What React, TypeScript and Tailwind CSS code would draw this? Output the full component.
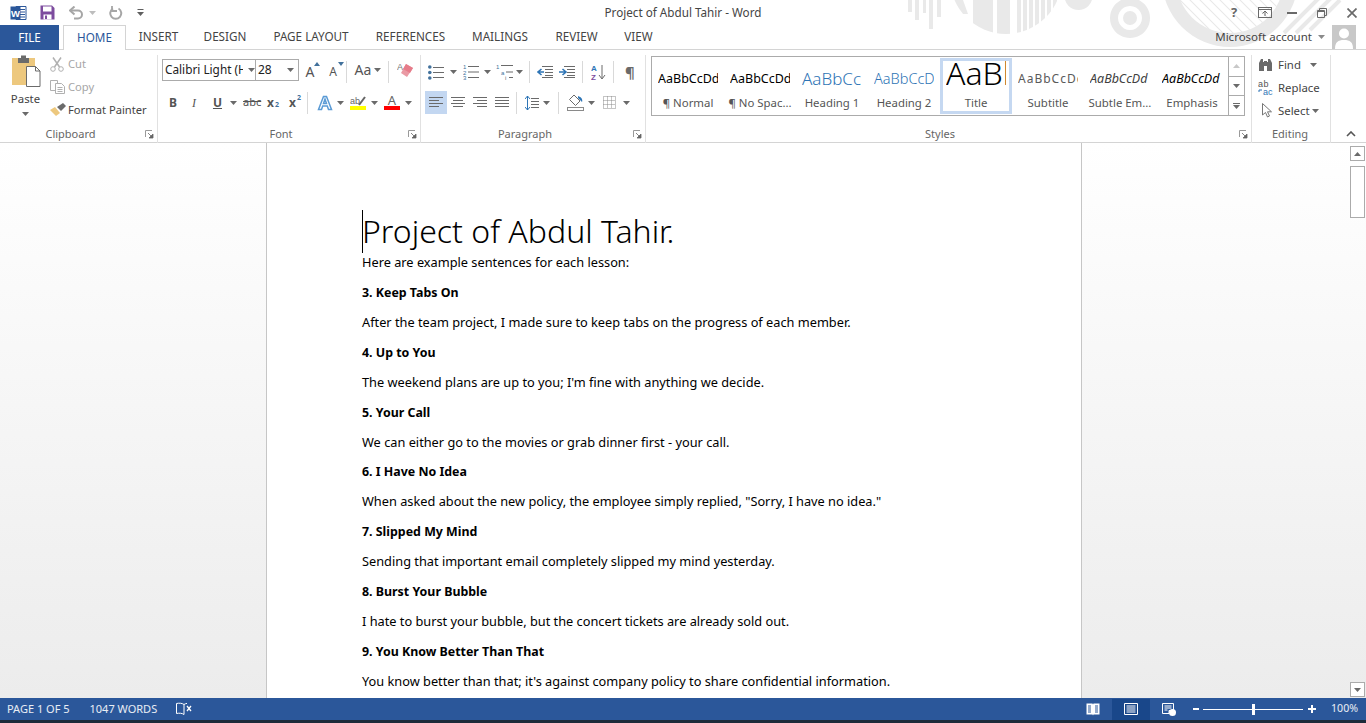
import React from "react";

const ui = "font-['Noto_Sans',sans-serif]";

function Caret({ c = "#6a6a6a", className = "" }: { c?: string; className?: string }) {
  return (
    <svg width="7" height="4" viewBox="0 0 7 4" className={"shrink-0 " + className}>
      <path d="M0 0h7L3.5 4z" fill={c} />
    </svg>
  );
}

function Launcher() {
  return (
    <svg width="9" height="9" viewBox="0 0 9 9" className="shrink-0">
      <path d="M0.5 7V0.5H7" fill="none" stroke="#9a9a9a" />
      <path d="M3 3l4 4M8 4v4H4z" fill="#666" stroke="#666" strokeWidth="0.8" />
    </svg>
  );
}

function Sep({ h = "h-[30px]" }: { h?: string }) {
  return <div className={"w-px bg-[#d9d9d9] shrink-0 " + h} />;
}

function Lines({ w = 16, rows, color = "#6a6a6a" }: { w?: number; rows: [number, number][]; color?: string }) {
  return (
    <svg width={w} height="13" viewBox={`0 0 ${w} 13`} className="shrink-0">
      {rows.map(([a, b], i) => (
        <rect key={i} x={a} y={i * 3 + 0.0} width={b - a} height="1" fill={color} />
      ))}
    </svg>
  );
}

function Watermark() {
  const stripes: number[] = [];
  for (let x = 1017; x < 1058; x += 6) stripes.push(x);
  const diag: number[] = [];
  for (let x = 1150; x < 1300; x += 10) diag.push(x);
  return (
    <svg className="absolute left-0 top-0 pointer-events-none" width="1366" height="50" viewBox="0 0 1366 50">
      <defs>
        <clipPath id="c1"><circle cx="1006" cy="-22" r="56" /></clipPath>
        <clipPath id="c3"><circle cx="1230" cy="-21" r="54" /></clipPath>
      </defs>
      <g fill="#e9e9e9">
        <rect x="908" y="0" width="4" height="12" />
        <rect x="915" y="0" width="4" height="20" />
        <rect x="923" y="0" width="3" height="13" />
        <rect x="929" y="0" width="4" height="29" />
        <rect x="937" y="0" width="4" height="17" />
        <g clipPath="url(#c1)">
          <path d="M950 0h13l5 14-10 0z" />
          <rect x="973" y="0" width="20" height="40" />
          <rect x="997" y="0" width="13" height="40" />
          {stripes.map((x) => <rect key={x} x={x} y="0" width="4" height="40" />)}
        </g>
        <circle cx="1078.5" cy="-4" r="14" />
        <path fillRule="evenodd" d="M1130 -2a20 20 0 1 0 0.01 0zM1130 6a12 12 0 1 1 -0.01 0z" />
        <circle cx="1130" cy="18" r="7" />
        <circle cx="1230" cy="-21" r="68" />
      </g>
      <g clipPath="url(#c3)" stroke="#ffffff" strokeWidth="6">
        {diag.map((x) => <path key={x} d={`M${x} -5l60 60`} />)}
      </g>
      <g stroke="#e9e9e9" strokeWidth="4">
        <path d="M1284 33L1320 -3M1296 33L1332 -3M1310 30L1340 0" />
      </g>
    </svg>
  );
}

function WordLogo() {
  return (
    <svg width="17" height="16" viewBox="0 0 17 16">
      <path d="M6 1.5h10v13H6z" fill="#fff" stroke="#2b579a" />
      <path d="M10 4.5h5M10 7h5M10 9.5h5M10 12h5" stroke="#2b579a" />
      <rect x="0.5" y="1.5" width="10" height="13" fill="#2b579a" />
      <text x="5.5" y="11.5" fontSize="9.5" fontWeight="700" fill="#fff" textAnchor="middle" fontFamily="Liberation Sans">W</text>
    </svg>
  );
}

function TitleBar() {
  return (
    <div className="relative z-10 h-[25px] flex items-center shrink-0">
      <div className="w-[40px] pl-[10px] flex items-center shrink-0"><WordLogo /></div>
      <svg width="15" height="15" viewBox="0 0 15 15" className="shrink-0">
        <path d="M0.5 0.5h11.5l2.5 2.5v11.5h-14z" fill="#7d4c9e" />
        <rect x="3" y="1.5" width="8.5" height="5" fill="#fff" />
        <rect x="3.5" y="9.5" width="8" height="5" fill="#fff" />
        <rect x="5" y="10.5" width="2" height="3.5" fill="#7d4c9e" />
      </svg>
      <svg width="15" height="14" viewBox="0 0 15 14" className="ml-[14px] shrink-0">
        <path d="M2 4.5h7a4 4 0 0 1 0 8H5" fill="none" stroke="#a6a6a6" strokeWidth="2" />
        <path d="M5.5 0.5L1 4.5l4.5 4" fill="none" stroke="#a6a6a6" strokeWidth="2" />
      </svg>
      <Caret c="#bdbdbd" className="ml-[5px]" />
      <svg width="14" height="14" viewBox="0 0 14 14" className="ml-[13px] shrink-0">
        <path d="M9.5 2.5a5.5 5.5 0 1 1-5.5 0" fill="none" stroke="#a6a6a6" strokeWidth="2" />
        <path d="M3 0v5h5" fill="none" stroke="#a6a6a6" strokeWidth="1.8" />
      </svg>
      <svg width="7" height="7" viewBox="0 0 7 7" className="ml-[14px] shrink-0">
        <path d="M0.5 0.5h6" stroke="#5f5f5f" />
        <path d="M0 3h7L3.5 7z" fill="#5f5f5f" />
      </svg>
      <div className={`${ui} flex-1 text-center text-[11.7px] text-[#444] mr-[233px] pl-[89px]`}>Project of Abdul Tahir - Word</div>
      <div className="absolute right-0 top-0 h-[25px] flex items-center">
        <span className={`${ui} text-[13px] font-bold text-[#666] w-[14px] text-center mr-[17px]`}>?</span>
        <svg width="14" height="11" viewBox="0 0 14 11" className="mr-[15px]">
          <rect x="0.5" y="0.5" width="13" height="10" fill="none" stroke="#6a6a6a" />
          <path d="M0.5 2.5h13" stroke="#6a6a6a" />
          <path d="M7 9V5M4.5 6.5L7 4l2.500 2.500" fill="none" stroke="#6a6a6a" />
        </svg>
        <div className="w-[10px] h-[2px] bg-[#6a6a6a] mr-[20px] mt-[1px]" />
        <svg width="10" height="10" viewBox="0 0 10 10" className="mr-[20px]">
          <path d="M0.500 2.500h7v7h-7zM2.500 2.500v-2h7v7h-2" fill="none" stroke="#6a6a6a" />
          <path d="M0.500 3.500h7" stroke="#6a6a6a" />
        </svg>
        <svg width="10" height="10" viewBox="0 0 10 10" className="mr-[9px]">
          <path d="M0.500 0.500l9 9M9.500 0.500l-9 9" stroke="#6a6a6a" strokeWidth="1.700" />
        </svg>
      </div>
    </div>
  );
}

function Tabs() {
  const tabs: [string, string][] = [
    ["INSERT", "w-[65px]"],
    ["DESIGN", "w-[68px]"],
    ["PAGE LAYOUT", "w-[104px]"],
    ["REFERENCES", "w-[95px]"],
    ["MAILINGS", "w-[84px]"],
    ["REVIEW", "w-[69px]"],
    ["VIEW", "w-[55px]"],
  ];
  return (
    <div className={`${ui} relative z-10 h-[25px] flex text-[11.7px] text-[#444] shrink-0 border-b border-[#d4d4d4]`}>
      <div className="w-[59px] h-[25px] bg-[#2b579a] text-white flex items-center justify-center">FILE</div>
      <div className="w-[63px] ml-[4px] h-[25px] bg-white border border-b-0 border-[#d4d4d4] text-[#2b579a] flex items-center justify-center">HOME</div>
      {tabs.map(([t, w]) => (
        <div key={t} className={`${w} flex items-center justify-center h-[24px]`}>{t}</div>
      ))}
      <div className="flex-1" />
      <div className="flex items-start mr-[10px] relative">
        <span className="text-[11.5px] text-[#444] mt-[3px] mr-[6px]">Microsoft account</span>
        <Caret c="#8a8a8a" className="mt-[10px] mr-[7px]" />
        <svg width="24" height="24" viewBox="0 0 24 24" className="shrink-0">
          <rect width="24" height="24" fill="#c8c8c8" />
          <circle cx="12" cy="8.500" r="5" fill="#fff" />
          <path d="M3 24c0-7 3-9 9-9s9 2 9 9z" fill="#fff" />
        </svg>
      </div>
    </div>
  );
}

function GroupLabel({ text, launcher = true, className = "" }: { text: string; launcher?: boolean; className?: string }) {
  return (
    <div className={"relative h-[16px] flex items-center justify-center text-[11px] text-[#666] " + className}>
      <span>{text}</span>
      {launcher && <span className="absolute right-[3px] top-[4px] flex"><Launcher /></span>}
    </div>
  );
}

function Clipboard() {
  return (
    <div className="w-[157px] shrink-0 flex flex-col">
      <div className="h-[76px] flex">
        <div className="w-[50px] flex flex-col items-center pt-[4px] pl-[1px]">
          <svg width="30" height="33" viewBox="0 0 30 33">
            <rect x="1" y="3" width="23" height="27" fill="#edc87e" />
            <rect x="7" y="3" width="11" height="5" fill="#6b6b6b" />
            <rect x="10" y="0.500" width="5" height="4" fill="#6b6b6b" />
            <path d="M15.500 11.500h9l4.500 4.500v15.500h-13.500z" fill="#fff" stroke="#6b6b6b" />
            <path d="M24.500 11.500v4.500h4.500" fill="none" stroke="#6b6b6b" />
          </svg>
          <span className="text-[11.4px] text-[#444] leading-[14px] mt-[4px]">Paste</span>
          <Caret className="mt-[6px]" />
        </div>
        <div className="flex-1 flex flex-col text-[11.2px] leading-[16px] pt-[1.500px]">
          <div className="h-[23px] flex items-center text-[#a6a6a6]">
            <svg width="14" height="15" viewBox="0 0 14 15" className="mr-[4px]">
              <path d="M3 0.500L9.500 10M11 0.500L4.500 10" stroke="#b0b0b0" strokeWidth="1.500" fill="none" />
              <circle cx="3" cy="12" r="2.300" fill="none" stroke="#b0b0b0" />
              <circle cx="11" cy="12" r="2.300" fill="none" stroke="#b0b0b0" />
            </svg>
            Cut
          </div>
          <div className="h-[23px] flex items-center text-[#a6a6a6]">
            <svg width="15" height="14" viewBox="0 0 15 14" className="mr-[3px]">
              <path d="M0.500 0.500h7v10h-7z" fill="#fff" stroke="#b0b0b0" />
              <path d="M5.500 3.500h6l3 3v7h-9z" fill="#fff" stroke="#b0b0b0" />
              <path d="M7.500 7.500h5M7.500 9.500h5M7.500 11.500h5" stroke="#b0b0b0" />
            </svg>
            Copy
          </div>
          <div className="h-[23px] flex items-center text-[#444]">
            <svg width="16" height="14" viewBox="0 0 16 14" className="mr-[2px] shrink-0">
              <path d="M0 7l5-3 5 6-4 3z" fill="#edc87e" />
              <path d="M7 4l6-4 3 3-5 5z" fill="#6b6b6b" />
            </svg>
            <span className="whitespace-nowrap">Format Painter</span>
          </div>
        </div>
      </div>
      <GroupLabel text="Clipboard" className="pr-[16px]" />
    </div>
  );
}

function Font() {
  const btn = "flex items-center justify-center text-[#555]";
  return (
    <div className="w-[262px] shrink-0 flex flex-col">
      <div className="h-[76px] flex flex-col">
        <div className="h-[29px] pt-[8px] flex items-start pl-[4px]">
          <div className="flex items-center w-[94px] h-[22px] border border-[#ababab] bg-white pl-[2px] overflow-hidden">
            <span className="text-[11.8px] text-[#222] w-[78px] overflow-hidden whitespace-nowrap shrink-0">Calibri Light (H</span>
            <Caret className="ml-[5px]" />
          </div>
          <div className="flex items-center w-[43px] h-[22px] border border-[#ababab] border-l-0 bg-white pl-[2px]">
            <span className="text-[12px] text-[#222] w-[29px]">28</span>
            <Caret />
          </div>
          <div className={`${btn} w-[23px] h-[22px] ml-[1px] relative`}>
            <span className="text-[14px] leading-none mt-[3px] mr-[3px]">A</span>
            <svg width="6" height="4" viewBox="0 0 6 4" className="absolute right-[3px] top-[3px]"><path d="M0 4h6L3 0z" fill="#41719c" /></svg>
          </div>
          <div className={`${btn} w-[23px] h-[22px] relative`}>
            <span className="text-[12px] leading-none mt-[4px] mr-[3px]">A</span>
            <svg width="6" height="4" viewBox="0 0 6 4" className="absolute right-[2px] top-[3px]"><path d="M0 0h6L3 4z" fill="#41719c" /></svg>
          </div>
          <div className="mt-[2px]"><Sep h="h-[22px]" /></div>
          <div className={`${btn} text-[14px] w-[41px] h-[22px] gap-[3px] pl-[1px]`}>
            <span className="leading-none">Aa</span><Caret />
          </div>
          <div className="mt-[2px]"><Sep h="h-[22px]" /></div>
          <svg width="17" height="17" viewBox="0 0 17 17" className="ml-[8px] mt-[2px]">
            <text x="0" y="9" fontSize="9" fill="#777" fontFamily="Liberation Sans">A</text>
            <path d="M9 3l7 4-6 9-6-4z" fill="#ea9aa4" />
            <path d="M9 3l7 4-3 5-7-4z" fill="#e67c8a" />
          </svg>
        </div>
        <div className="h-[38px] pt-[7px] flex items-center text-[#555] pl-[10px]">
          <span className="text-[12px] font-bold w-[10px] text-center">B</span>
          <span className="text-[12px] italic w-[10px] text-center ml-[11px] font-['Liberation_Serif',serif]">I</span>
          <span className="text-[12px] font-bold underline w-[11px] text-center ml-[13px]">U</span>
          <Caret className="ml-[7px]" />
          <span className="text-[11px] line-through ml-[6px] w-[17px] text-center">abc</span>
          <span className="text-[12px] font-bold ml-[7px] relative w-[14px]">x<span className="absolute text-[7px] left-[8px] top-[6px] text-[#41719c]">2</span></span>
          <span className="text-[12px] font-bold ml-[8px] relative w-[14px]">x<span className="absolute text-[7px] left-[8px] top-[-1px] text-[#41719c]">2</span></span>
          <div className="ml-[4px]"><Sep h="h-[22px]" /></div>
          <svg width="16" height="16" viewBox="0 0 16 16" className="ml-[9px]">
            <path d="M1.500 14.500L6.500 1.500h3l5 13h-3l-1.200-3.500h-4.600L4.500 14.500zM6.500 8.500h3L8 4z" fill="#fff" stroke="#5b9bd5" strokeWidth="1.500" />
          </svg>
          <Caret className="ml-[4px]" />
          <div className="ml-[6px] w-[16px] flex flex-col items-center">
            <svg width="16" height="10" viewBox="0 0 16 10">
              <text x="0" y="8" fontSize="9" fill="#666" fontFamily="Liberation Sans">ab</text>
              <path d="M9 9l6-8" stroke="#666" strokeWidth="2" />
            </svg>
            <div className="w-[16px] h-[4px] bg-[#ffff00]" />
          </div>
          <Caret className="ml-[5px]" />
          <div className="ml-[6px] w-[16px] flex flex-col items-center">
            <span className="text-[13px] leading-[10px] h-[10px] text-[#666]">A</span>
            <div className="w-[16px] h-[4px] bg-[#ff0000] mt-[1px]" />
          </div>
          <Caret className="ml-[5px]" />
        </div>
      </div>
      <GroupLabel text="Font" className="pr-[16px]" />
    </div>
  );
}

function Paragraph() {
  const bullets = (
    <svg width="16" height="15" viewBox="0 0 16 15">
      <path d="M5 2.500h11M5 7.500h11M5 12.500h11" stroke="#6a6a6a" />
      <circle cx="1.800" cy="2" r="1.800" fill="#41719c" />
      <circle cx="1.800" cy="7.500" r="1.800" fill="#41719c" />
      <circle cx="1.800" cy="13" r="1.800" fill="#41719c" />
    </svg>
  );
  const nums = (
    <svg width="16" height="16" viewBox="0 0 16 16" fontFamily="Liberation Sans" fontSize="6" fill="#41719c">
      <text x="0" y="5">1</text><text x="0" y="10.500">2</text><text x="0" y="16">3</text>
      <path d="M5 2.500h11M5 8h11M5 13.500h11" stroke="#6a6a6a" />
    </svg>
  );
  const multi = (
    <svg width="17" height="16" viewBox="0 0 17 16" fontFamily="Liberation Sans" fontSize="6" fill="#41719c">
      <text x="0" y="5">1</text><text x="5" y="10.500">a</text><text x="9" y="16" fill="#6a6a6a">i</text>
      <path d="M5 1.500h12M10 8h7M13 13.500h4" stroke="#6a6a6a" />
    </svg>
  );
  const outdent = (
    <svg width="16" height="12" viewBox="0 0 16 12">
      <path d="M5 0.500h11M8 3.500h8M8 6.500h8M8 9.500h8M5 11.500h11" stroke="#6a6a6a" />
      <path d="M7 6H2M4.500 3L1 6l3.500 3" fill="none" stroke="#2e75b6" strokeWidth="1.600" />
    </svg>
  );
  const indent = (
    <svg width="16" height="12" viewBox="0 0 16 12">
      <path d="M5 0.500h11M8 3.500h8M8 6.500h8M8 9.500h8M5 11.500h11" stroke="#6a6a6a" />
      <path d="M0 6h6M3.500 3L7 6l-3.500 3" fill="none" stroke="#2e75b6" strokeWidth="1.600" />
    </svg>
  );
  return (
    <div className="w-[224px] shrink-0 flex flex-col">
      <div className="h-[76px] flex flex-col">
        <div className="h-[39px] pt-[3px] flex items-center pl-[7px]">
          {bullets}<Caret className="ml-[6px]" />
          <span className="ml-[6px] flex">{nums}</span><Caret className="ml-[5px]" />
          <span className="ml-[5px] flex">{multi}</span><Caret className="ml-[3px]" />
          <div className="ml-[6px]"><Sep h="h-[22px]" /></div>
          <span className="ml-[7px] flex">{outdent}</span>
          <span className="ml-[6px] flex">{indent}</span>
          <div className="ml-[7px]"><Sep h="h-[22px]" /></div>
          <svg width="15" height="16" viewBox="0 0 15 16" className="ml-[8px]" fontFamily="Liberation Sans" fontSize="8" fontWeight="700">
            <text x="0" y="7" fill="#2e75b6">A</text><text x="0" y="16" fill="#7d4c9e">Z</text>
            <path d="M11 1v13M8 11l3 4 3-4" fill="none" stroke="#6a6a6a" />
          </svg>
          <div className="ml-[7px]"><Sep h="h-[22px]" /></div>
          <span className="ml-[11px] text-[15px] font-bold text-[#6a6a6a] leading-none">¶</span>
        </div>
        <div className="h-[23px] mt-[1px] flex items-center pl-[4px]">
          <div className="w-[22px] h-[23px] bg-[#c3d7f1] flex items-center justify-center pt-[1px]">
            <Lines w={14} rows={[[0, 14], [0, 10], [0, 14], [0, 10]]} />
          </div>
          <div className="w-[22px] h-[23px] flex items-center justify-center pt-[1px]">
            <Lines w={14} rows={[[0, 14], [2, 12], [0, 14], [2, 12]]} />
          </div>
          <div className="w-[22px] h-[23px] flex items-center justify-center pt-[1px]">
            <Lines w={14} rows={[[0, 14], [4, 14], [0, 14], [4, 14]]} />
          </div>
          <div className="w-[22px] h-[23px] flex items-center justify-center pt-[1px]">
            <Lines w={14} rows={[[0, 14], [0, 14], [0, 14], [0, 14]]} />
          </div>
          <div className="ml-[3px]"><Sep h="h-[22px]" /></div>
          <svg width="14" height="16" viewBox="0 0 14 16" className="ml-[8px]">
            <path d="M2.500 1v14M0 4l2.500-3L5 4M0 12l2.500 3L5 12" fill="none" stroke="#2e75b6" />
            <path d="M6 3.500h8M6 6.500h8M6 9.500h8M6 12.500h8" stroke="#6a6a6a" />
          </svg>
          <Caret className="ml-[4px]" />
          <div className="ml-[8px]"><Sep h="h-[22px]" /></div>
          <svg width="17" height="17" viewBox="0 0 17 17" className="ml-[8px]">
            <path d="M7 1l6 6-4.500 4.500-6-6z" fill="#fff" stroke="#6a6a6a" />
            <path d="M11 2c3 1 5 3 4 6l-4-4z" fill="#2e75b6" />
            <rect x="0.500" y="13.500" width="16" height="3" fill="#fff" stroke="#8a8a8a" />
          </svg>
          <Caret className="ml-[4px]" />
          <svg width="13" height="13" viewBox="0 0 13 13" className="ml-[8px]">
            <path d="M0.500 0.500h12v12h-12zM0.500 4.500h12M0.500 8.500h12M4.500 0.500v12M8.500 0.500v12" fill="none" stroke="#8a8a8a" strokeDasharray="1 1" />
          </svg>
          <Caret className="ml-[7px]" />
        </div>
      </div>
      <GroupLabel text="Paragraph" className="pr-[16px]" />
    </div>
  );
}

function StyleItem({ label, children, selected }: { label: string; children: React.ReactNode; selected?: boolean }) {
  return (
    <div className={"w-[72px] h-[56px] shrink-0 flex flex-col items-center " + (selected ? "border-[3px] border-[#c5d8f1]" : "border-[3px] border-transparent")}>
      <div className="h-[34px] pt-[2px] w-[60px] overflow-hidden flex items-center justify-start whitespace-nowrap">{children}</div>
      <div className="text-[11.4px] text-[#555] leading-[14px] whitespace-nowrap mt-[1px]">{label}</div>
    </div>
  );
}

function Styles() {
  return (
    <div className="w-[605px] shrink-0 flex flex-col">
      <div className="h-[76px] pt-[5px] pl-[5px]">
        <div className="w-[594px] h-[60px] border border-[#ababab] bg-white flex items-center">
          <StyleItem label="¶ Normal"><span className="text-[12.5px] text-black">AaBbCcDd</span></StyleItem>
          <StyleItem label="¶ No Spac..."><span className="text-[12.5px] text-black">AaBbCcDd</span></StyleItem>
          <StyleItem label="Heading 1"><span className="text-[17px] text-[#2e74b5] font-light">AaBbCcDd</span></StyleItem>
          <StyleItem label="Heading 2"><span className="text-[14.5px] text-[#2e74b5] font-light">AaBbCcDd</span></StyleItem>
          <StyleItem label="Title" selected><span className="text-[32px] leading-[30px] text-black font-light mt-[-13px]">AaBbC</span></StyleItem>
          <StyleItem label="Subtitle"><span className="text-[12px] text-[#5a5a5a] tracking-[1px]">AaBbCcDd</span></StyleItem>
          <StyleItem label="Subtle Em..."><span className="text-[12.5px] italic text-[#404040]">AaBbCcDd</span></StyleItem>
          <StyleItem label="Emphasis"><span className="text-[12.5px] italic text-black">AaBbCcDd</span></StyleItem>
          <div className="flex-1 h-full border-l border-[#ababab] flex flex-col">
            <div className="flex-1 flex items-center justify-center"><svg width="7" height="4" viewBox="0 0 7 4"><path d="M0 4h7L3.500 0z" fill="#c8c8c8" /></svg></div>
            <div className="flex-1 border-t border-b border-[#ababab] flex items-center justify-center"><Caret /></div>
            <div className="flex-1 flex flex-col items-center justify-center gap-[1px]">
              <div className="w-[7px] h-px bg-[#6a6a6a]" /><Caret />
            </div>
          </div>
        </div>
      </div>
      <GroupLabel text="Styles" className="pr-[17px]" />
    </div>
  );
}

function Editing() {
  return (
    <div className="w-[78px] shrink-0 flex flex-col">
      <div className="h-[76px] flex flex-col text-[11.4px] text-[#444] pt-[2px] pl-[6px]">
        <div className="h-[23px] flex items-center">
          <svg width="15" height="14" viewBox="0 0 15 14" className="mr-[5px]">
            <path d="M1 5l2-4h2v3h1v-1h3v1h1V1h2l2 4v8H9V8H6v5H1z" fill="#6a6a6a" />
          </svg>
          Find<Caret className="ml-[9px]" />
        </div>
        <div className="h-[23px] flex items-center">
          <svg width="15" height="16" viewBox="0 0 15 16" className="mr-[5px]" fontFamily="Liberation Sans" fontSize="9">
            <text x="0" y="7" fill="#555">a</text><text x="5.500" y="7" fill="#555">b</text>
            <text x="5" y="15" fill="#2e75b6">ac</text>
            <path d="M4 10H1v2" fill="none" stroke="#2e75b6" />
          </svg>
          Replace
        </div>
        <div className="h-[23px] flex items-center">
          <svg width="11" height="15" viewBox="0 0 11 15" className="ml-[4px] mr-[5px]">
            <path d="M0.500 0.500v11.500l3-2.500 2 4.500 2-1-2-4.200h4z" fill="#fff" stroke="#777" />
          </svg>
          Select<Caret className="ml-[2px]" />
        </div>
      </div>
      <GroupLabel text="Editing" launcher={false} className="pr-[2px]" />
    </div>
  );
}

function Ribbon() {
  return (
    <div className={`${ui} relative z-10 h-[93px] pt-[1px] shrink-0 bg-white border-b border-[#d4d4d4] flex`}>
      <Clipboard />
      <div className="w-px h-[88px] bg-[#e1e1e1] mt-[4px] shrink-0" />
      <Font />
      <div className="w-px h-[88px] bg-[#e1e1e1] mt-[4px] shrink-0" />
      <Paragraph />
      <div className="w-px h-[88px] bg-[#e1e1e1] mt-[4px] shrink-0" />
      <Styles />
      <div className="w-px h-[88px] bg-[#e1e1e1] mt-[4px] shrink-0" />
      <Editing />
      <div className="w-px h-[88px] bg-[#e1e1e1] mt-[4px] shrink-0" />
      <div className="flex-1 flex justify-center items-end pb-[5px] pl-[5px]">
        <svg width="10" height="6" viewBox="0 0 10 6"><path d="M1 5l4-4 4 4" fill="none" stroke="#555" strokeWidth="1.600" /></svg>
      </div>
    </div>
  );
}

const content: [string, boolean][] = [
  ["Here are example sentences for each lesson:", false],
  ["3. Keep Tabs On", true],
  ["After the team project, I made sure to keep tabs on the progress of each member.", false],
  ["4. Up to You", true],
  ["The weekend plans are up to you; I'm fine with anything we decide.", false],
  ["5. Your Call", true],
  ["We can either go to the movies or grab dinner first - your call.", false],
  ["6. I Have No Idea", true],
  ['When asked about the new policy, the employee simply replied, "Sorry, I have no idea."', false],
  ["7. Slipped My Mind", true],
  ["Sending that important email completely slipped my mind yesterday.", false],
  ["8. Burst Your Bubble", true],
  ["I hate to burst your bubble, but the concert tickets are already sold out.", false],
  ["9. You Know Better Than That", true],
  ["You know better than that; it's against company policy to share confidential information.", false],
];

function Doc() {
  return (
    <div className="flex-1 min-h-0 flex bg-gradient-to-b from-white to-[#ececec] overflow-hidden">
      <div className="flex-1 min-w-0 flex justify-start overflow-hidden">
        <div className="ml-[266px] w-[816px] shrink-0 bg-white border-x border-[#c6c6c6] pl-[95px] pt-[62px] h-[800px] font-['Noto_Sans',sans-serif] text-black">
          <div className="relative text-[32px] font-light leading-[52px] h-[47px] whitespace-nowrap">
            <span className="absolute left-0 top-[5px] w-px h-[43px] bg-black" />
            Project of Abdul Tahir.
          </div>
          {content.map(([t, b]) => (
            <p key={t} className={"whitespace-nowrap " + (b ? "font-bold text-[12.4px] leading-[20px] pt-[1px] mb-[8.930px]" : "text-[12.77px] leading-[20px] mb-[9.930px]")}>{t}</p>
          ))}
        </div>
      </div>
      <div className="w-[17px] shrink-0 flex flex-col items-center">
        <div className="w-[15px] h-[15px] mt-[3px] bg-white border border-[#ababab] flex items-center justify-center">
          <svg width="7" height="4" viewBox="0 0 7 4"><path d="M0 4h7L3.500 0z" fill="#6a6a6a" /></svg>
        </div>
        <div className="w-[15px] h-[52px] mt-[5px] bg-white border border-[#ababab]" />
        <div className="flex-1" />
        <div className="w-[15px] h-[15px] mb-[1px] bg-white border border-[#ababab] flex items-center justify-center">
          <Caret />
        </div>
      </div>
    </div>
  );
}

function StatusBar() {
  return (
    <div className={`${ui} h-[22px] shrink-0 bg-[#2b579a] flex items-center text-[11px] text-white/90`}>
      <span className="ml-[7px]">PAGE 1 OF 5</span>
      <span className="ml-[20px]">1047 WORDS</span>
      <svg width="16" height="14" viewBox="0 0 16 14" className="ml-[19px]">
        <path d="M8 2.500C6 1 3 1 0.500 1.500v10C3 11 6 11 8 12.500V2.500zM8 2.500c1-.7 2-1 3-1.100" fill="none" stroke="#fff" />
        <path d="M11 4l4 5M15 4l-4 5" stroke="#fff" strokeWidth="1.300" />
      </svg>
      <div className="flex-1" />
      <svg width="14" height="13" viewBox="0 0 14 13" className="mr-[12px]">
        <path d="M0.500 0.500h6l0.500 1 0.500-1h6v11h-6L7 12.500l-0.500-1h-6z" fill="#fff" />
        <path d="M2 3h3M2 5h3M2 7h3M2 9h3M9 3h3M9 5h3M9 7h3M9 9h3" stroke="#2b579a" />
      </svg>
      <div className="w-[38px] h-[21px] bg-[#19478a] flex items-center justify-center mr-[12px]">
        <svg width="14" height="12" viewBox="0 0 14 12">
          <path d="M0.500 0.500h13v11h-13z" fill="none" stroke="#fff" />
          <path d="M2.500 3h9M2.500 5h9M2.500 7h9M2.500 9h9" stroke="#fff" />
        </svg>
      </div>
      <svg width="14" height="13" viewBox="0 0 14 13" className="mr-[17px]">
        <path d="M0.500 0.500h11v7H7v3H0.500z" fill="none" stroke="#fff" />
        <path d="M2.500 3h7M2.500 5h7M2.500 7h3" stroke="#fff" />
        <circle cx="10.500" cy="9.500" r="3.500" fill="#fff" />
      </svg>
      <div className="w-[6px] h-[2px] bg-white mr-[4px]" />
      <div className="relative w-[100px] h-px bg-white mr-[4px]">
        <div className="absolute left-[49px] top-[-5px] w-[3px] h-[11px] bg-white" />
      </div>
      <div className="relative w-[8px] h-[8px] ml-[1px] mr-[15px] flex items-center justify-center">
        <div className="absolute w-[8px] h-[2px] bg-white" />
        <div className="absolute w-[2px] h-[8px] bg-white" />
      </div>
      <span className="mr-[8px] text-[10.600px]">100%</span>
    </div>
  );
}

export default function App() {
  return (
    <div className="relative w-[1366px] h-[723px] overflow-hidden bg-white flex flex-col">
      <Watermark />
      <TitleBar />
      <Tabs />
      <Ribbon />
      <Doc />
      <StatusBar />
      <div className="h-[3px] shrink-0 bg-[#1c2b3a]" />
    </div>
  );
}
